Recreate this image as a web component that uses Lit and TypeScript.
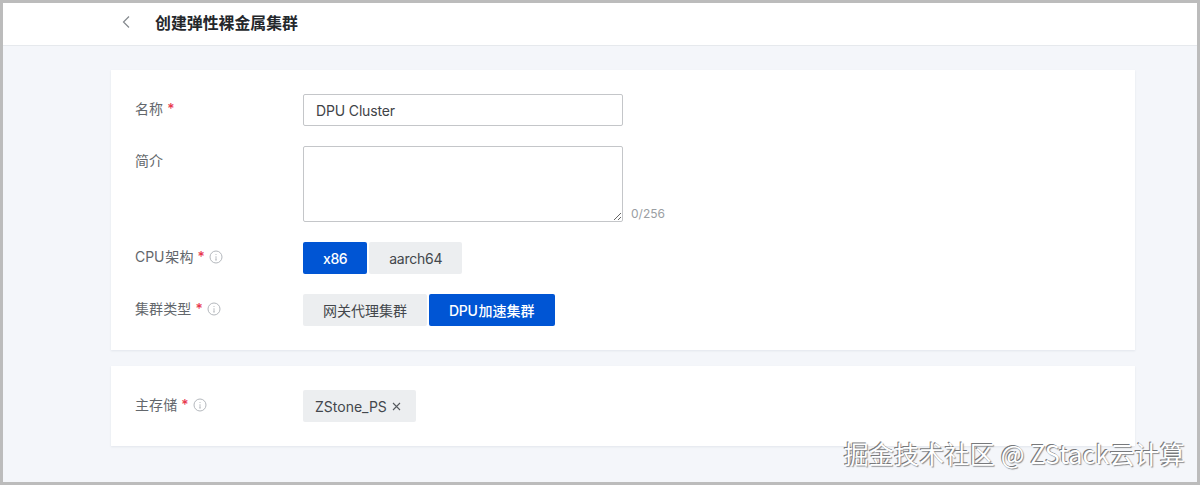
import { LitElement, html, css } from "lit";
import { customElement } from "lit/decorators.js";

const info = html`<svg class="info" viewBox="0 0 14 14" width="14" height="14" fill="none" stroke="#b4b8bd">
  <circle cx="7" cy="7" r="6" stroke-width="1"></circle>
  <path d="M7 6.2V10M6.2 10H7.8" stroke-width="0.9"></path>
  <path d="M7 4V4.9" stroke-width="1"></path>
</svg>`;

@customElement("app-root")
export class AppRoot extends LitElement {
  static styles = css`
    :host {
      display: block;
      width: 1200px;
      height: 485px;
      overflow: hidden;
      font-family: Inter, "Noto Sans CJK SC", sans-serif;
      font-size: 14px;
      color: #5f6368;
    }
    .frame {
      position: relative;
      box-sizing: border-box;
      width: 1200px;
      height: 485px;
      border: 3px solid #bcbcbc;
      background: #f4f6fa;
      display: flex;
      flex-direction: column;
    }
    .header {
      box-sizing: border-box;
      height: 43px;
      flex: none;
      background: #fff;
      border-bottom: 1px solid #e6e9ed;
      display: flex;
      align-items: center;
      padding: 0 0 4px 116px;
    }
    .back {
      width: 14px;
      height: 14px;
      margin-right: 22px;
      flex: none;
    }
    .title {
      font-size: 15.9px;
      font-weight: 600;
      color: #24272b;
    }
    .content {
      display: flex;
      flex-direction: column;
      gap: 16px;
      padding: 24px 62px 0 108px;
    }
    .card {
      background: #fff;
      padding: 24px;
      display: flex;
      flex-direction: column;
      gap: 20px;
      box-shadow: 0 1px 2px rgba(30, 50, 80, 0.08);
    }
    .row {
      display: flex;
      align-items: flex-start;
    }
    .label {
      width: 168px;
      flex: none;
      height: 28px;
      display: flex;
      align-items: center;
      gap: 3px;
      color: #63676c;
      letter-spacing: 0.1px;
    }
    .cpu {
      letter-spacing: -0.1px;
      margin-right: 1px;
    }
    .star {
      color: #e8384f;
      font-weight: 500;
      margin-left: 1px;
    }
    .info {
      margin-left: 1px;
      margin-top: 1px;
      flex: none;
    }
    .input,
    textarea {
      box-sizing: border-box;
      width: 320px;
      border: 1px solid #c4c6c9;
      border-radius: 2px;
      background: #fff;
      font: inherit;
      color: #3f4347;
      margin: 0;
      outline: none;
    }
    .input {
      height: 32px;
      padding: 0 12px;
      display: flex;
      align-items: center;
      letter-spacing: -0.15px;
    }
    textarea {
      height: 76px;
      display: block;
      padding: 6px 12px;
      flex: none;
    }
    .count {
      align-self: flex-end;
      margin-left: 8px;
      font-size: 12px;
      line-height: 16px;
      color: #9a9ea3;
    }
    .buttons {
      display: flex;
      gap: 2px;
    }
    .btn {
      box-sizing: border-box;
      height: 32px;
      padding: 0 20px;
      display: flex;
      align-items: center;
      border-radius: 2px;
      background: #eceef0;
      color: #43474c;
      font-weight: 400;
    }
    .btn.on {
      background: #0055d4;
      color: #fff;
      font-weight: 500;
    }
    .narrow {
      letter-spacing: -0.4px;
    }
    .aarch {
      letter-spacing: -0.25px;
    }
    .word {
      letter-spacing: -0.3px;
      margin-right: 1px;
    }
    .tag {
      box-sizing: border-box;
      height: 32px;
      width: 113px;
      padding-left: 12px;
      gap: 5px;
      display: flex;
      align-items: center;
      background: #eceef0;
      border-radius: 2px;
      color: #43474c;
    }
    .close {
      flex: none;
    }
    .watermark {
      position: absolute;
      right: 12px;
      bottom: 14px;
      font-family: "Noto Sans CJK SC", sans-serif;
      font-size: 25px;
      line-height: 30px;
      color: #fff;
      letter-spacing: 0.2px;
      text-shadow: -1px -1px 0 #77797c, 1px 1px 1px #8c8e91;
    }
  `;

  render() {
    return html`<div class="frame">
      <div class="header">
        <svg class="back" viewBox="0 0 14 14" fill="none" stroke="#85898e" stroke-width="1.2">
          <path d="M10 1.5L4.5 7L10 12.5"></path>
        </svg>
        <span class="title">创建弹性裸金属集群</span>
      </div>
      <div class="content">
        <div class="card">
          <div class="row">
            <div class="label">名称<span class="star">*</span></div>
            <div class="input">DPU Cluster</div>
          </div>
          <div class="row">
            <div class="label">简介</div>
            <textarea></textarea>
            <span class="count">0/256</span>
          </div>
          <div class="row">
            <div class="label"><span><span class="cpu">CPU</span>架构</span><span class="star">*</span>${info}</div>
            <div class="buttons">
              <div class="btn on narrow">x86</div>
              <div class="btn aarch">aarch64</div>
            </div>
          </div>
          <div class="row">
            <div class="label">集群类型<span class="star">*</span>${info}</div>
            <div class="buttons">
              <div class="btn">网关代理集群</div>
              <div class="btn on"><span class="word">DPU</span>加速集群</div>
            </div>
          </div>
        </div>
        <div class="card">
          <div class="row">
            <div class="label">主存储<span class="star">*</span>${info}</div>
            <div class="tag">
              ZStone_PS
              <svg class="close" viewBox="0 0 9 9" width="9" height="9" fill="none" stroke="#55595e" stroke-width="1.1">
                <path d="M1 1L8 8M8 1L1 8"></path>
              </svg>
            </div>
          </div>
        </div>
      </div>
      <div class="watermark">掘金技术社区 @ ZStack云计算</div>
    </div>`;
  }
}
